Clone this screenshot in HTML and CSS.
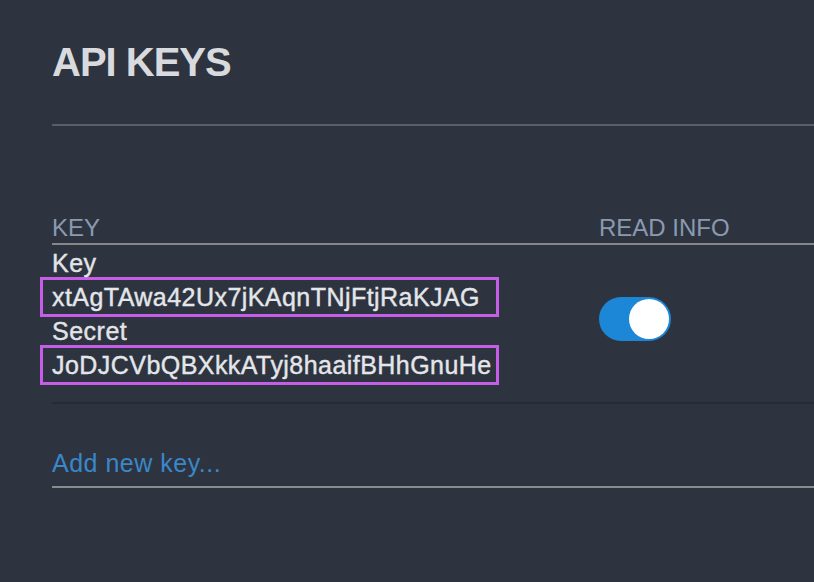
FILE: index.html
```html
<!DOCTYPE html>
<html>
<head>
<meta charset="utf-8">
<link rel="stylesheet" href="styles.css">
</head>
<body>
<div class="page">
  <h1 class="title">API KEYS</h1>
  <div class="rule"></div>
  <div class="table">
    <div class="thead">
      <div class="th">KEY</div>
      <div class="th">READ INFO</div>
    </div>
    <div class="row">
      <div class="keycell">
        <div class="label">Key</div>
        <div class="value">xtAgTAwa42Ux7jKAqnTNjFtjRaKJAG</div>
        <div class="label">Secret</div>
        <div class="value">JoDJCVbQBXkkATyj8haaifBHhGnuHe</div>
      </div>
      <div class="togglecell">
        <div class="toggle"><div class="knob"></div></div>
      </div>
    </div>
  </div>
  <div class="add">Add new key...</div>
</div>
</body>
</html>
```
FILE: styles.css
```css
html, body {
  margin: 0;
  padding: 0;
  background: #2d3440;
  height: 100%;
}
.page {
  padding: 38px 0 0 52px;
  font-family: "Liberation Sans", Arial, sans-serif;
}
.title {
  margin: 0;
  font-size: 40px;
  line-height: 48px;
  font-weight: bold;
  letter-spacing: -1px;
  color: #d8dade;
}
.rule {
  margin-top: 38px;
  height: 2px;
  background: #585e6a;
}
.table {
  margin-top: 87px;
}
.thead {
  display: grid;
  grid-template-columns: 547px 1fr;
  font-size: 24px;
  line-height: 30px;
  color: #8b9ab0;
  border-bottom: 2px solid #858789;
}
.row {
  display: grid;
  grid-template-columns: 547px 1fr;
  padding-top: 4px;
  padding-bottom: 17px;
  border-bottom: 2px solid #252a33;
}
.label {
  font-size: 25px;
  line-height: 28px;
  letter-spacing: 0.5px;
  color: #e2e4e8;
  -webkit-text-stroke: 0.4px currentColor;
}
.value {
  box-sizing: border-box;
  width: 459px;
  height: 40px;
  margin-left: -12px;
  padding-left: 9px;
  border: 3px solid #c45ee6;
  font-size: 25px;
  line-height: 34px;
  letter-spacing: 0.45px;
  color: #e4e6ea;
  white-space: nowrap;
  -webkit-text-stroke: 0.4px currentColor;
}
.togglecell {
  display: flex;
  align-items: flex-start;
  padding-top: 48px;
}
.toggle {
  position: relative;
  width: 72px;
  height: 44px;
  border-radius: 22px;
  background: #1c87d6;
}
.knob {
  position: absolute;
  right: 2px;
  top: 2px;
  width: 40px;
  height: 40px;
  border-radius: 50%;
  background: #ffffff;
}
.add {
  margin-top: 44px;
  font-size: 25px;
  line-height: 30px;
  letter-spacing: 0.5px;
  color: #3a87c9;
  padding-bottom: 8px;
  border-bottom: 2px solid #8a8b8d;
}
```
